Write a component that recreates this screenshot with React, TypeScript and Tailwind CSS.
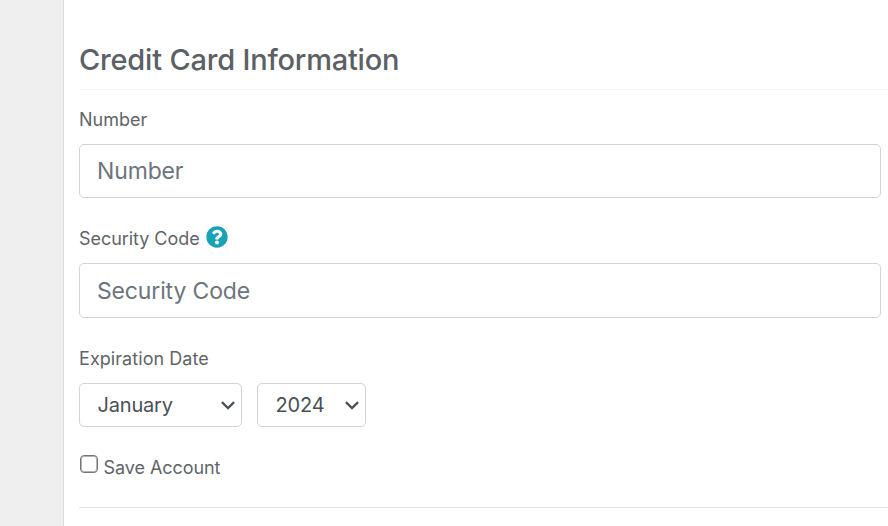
import { useState } from 'react';
import { FaQuestionCircle } from 'react-icons/fa';

const MONTHS = [
  'January',
  'February',
  'March',
  'April',
  'May',
  'June',
  'July',
  'August',
  'September',
  'October',
  'November',
  'December',
];

const YEARS = ['2024', '2025', '2026', '2027', '2028', '2029', '2030'];

interface SelectProps {
  label: string;
  options: string[];
  className: string;
}

function Select({ label, options, className }: SelectProps) {
  const [value, setValue] = useState(options[0]);

  return (
    <div className={`relative h-11 ${className}`}>
      <select
        aria-label={label}
        value={value}
        onChange={(e) => setValue(e.target.value)}
        className="block w-full h-full appearance-none rounded-[5px] border border-[#ced4da] bg-white pl-[17.5px] text-[20px] tracking-[-0.18px] text-[#495057]"
      >
        {options.map((option) => (
          <option key={option}>{option}</option>
        ))}
      </select>
      <svg
        viewBox="0 0 14 9"
        className="absolute right-[7px] top-[18px] w-[14px] h-[9px] pointer-events-none"
        fill="none"
        stroke="#495057"
        strokeWidth="2.2"
      >
        <path d="M0.9 1.1 L7 7.1 L13.1 1.1" />
      </svg>
    </div>
  );
}

export default function App() {
  const [saved, setSaved] = useState(false);

  return (
    <div className="flex h-[526px] overflow-hidden bg-[#efefef] font-['Inter',sans-serif] text-[#5f6469]">
      <div className="w-16 shrink-0 border-r border-[#dddddd]" />

      <form className="flex-1 bg-white pl-[15px]">
        <h2 className="h-[90px] pt-[42px] border-b border-[#f5f5f5] text-[29px] leading-9 font-medium tracking-[-0.2px] text-[#5b6065]">
          Credit Card Information
        </h2>

        <div className="pr-[7px]">
          <label htmlFor="number" className="block h-[54px] pt-[16px] text-[18px] leading-7">
            Number
          </label>
          <input
            id="number"
            placeholder="Number"
            className="block w-full h-[54px] rounded-[5px] border border-[#ced4da] px-[17px] pb-px text-[23px] tracking-[-0.15px] placeholder:text-[#6c757d]"
          />

          <label htmlFor="code" className="flex h-[65px] pt-[27px] text-[18px] leading-7 tracking-[-0.05px]">
            Security Code
            <FaQuestionCircle className="ml-[6.5px] mt-px w-[22px] h-[22px] text-[#17a2b8]" />
          </label>
          <input
            id="code"
            placeholder="Security Code"
            className="block w-full h-[55px] rounded-[5px] border border-[#ced4da] px-[17px] text-[23px] tracking-[-0.15px] placeholder:text-[#6c757d]"
          />

          <p className="h-[65px] pt-[27px] text-[18px] leading-7 tracking-[0.06px]">Expiration Date</p>
          <div className="flex gap-[15px]">
            <Select label="Month" options={MONTHS} className="w-[163px]" />
            <Select label="Year" options={YEARS} className="w-[109px]" />
          </div>
        </div>

        <label className="flex h-[80px] pt-[27px] text-[18px] leading-7 tracking-[-0.06px]">
          <input
            type="checkbox"
            checked={saved}
            onChange={(e) => setSaved(e.target.checked)}
            className="mt-px ml-[0.5px] mr-[6px] w-[18px] h-[18px] appearance-none rounded-[4px] border border-[#767676] bg-white shadow-[inset_0_0_0_1px_#b4b4b4] checked:bg-[#17a2b8]"
          />
          Save Account
        </label>
        <hr className="border-[#e1e2e3]" />
      </form>
    </div>
  );
}
